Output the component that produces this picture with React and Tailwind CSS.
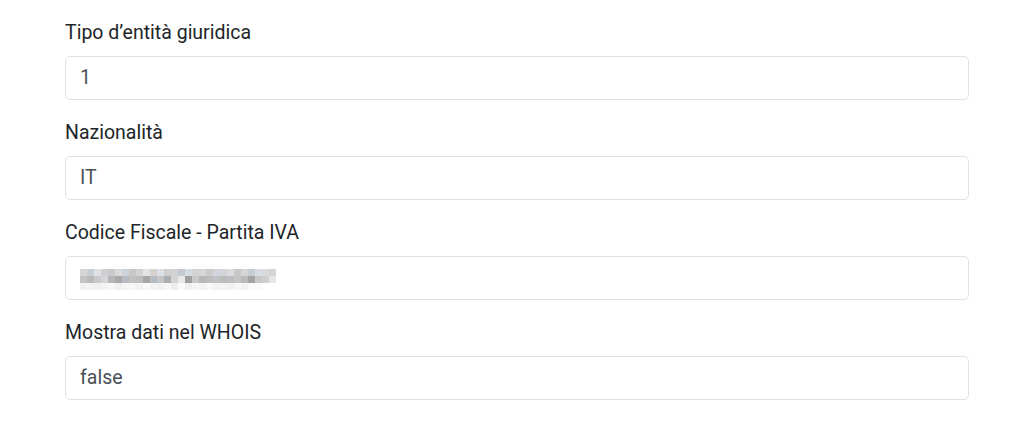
const fields = [
  { label: "Tipo d’entità giuridica", value: "1" },
  { label: "Nazionalità", value: "IT" },
  { label: "Codice Fiscale - Partita IVA", value: null },
  { label: "Mostra dati nel WHOIS", value: "false" },
];

// pixelated (blurred) value, as in the screenshot
const top = ["#d6d6d6", "#c8ced6", "#dfe3e8", "#cfcfcf", "#c9c9c9", "#d9d9d9", "#cdd3da", "#c7c7c7", "#d2d2d2", "#e3e3e3", "#d8d2cf", "#dbe0e6", "#cfcfcf", "#d1d1d1", "#c4c9cf", "#d6dbe2", "#d3d3d3", "#d7d7d7", "#cbcbcb", "#d0d6dd", "#d4d4d4", "#d9dde2", "#c9c9c9", "#d5d5d5", "#c6ccd3", "#d8dde3", "#dadada", "#d2d7dc"];
const mid = ["#c4c4c4", "#b9b9b9", "#c9c9c9", "#d5d5d5", "#b3b8bf", "#a9a9a9", "#b7bcc3", "#c1c1c1", "#bdbdbd", "#a6a6a6", "#b6bcc4", "#c6c6c6", "#a9aeb5", "#d3d3d3", "#e8e8e8", "#9f9f9f", "#c8c8c8", "#b8b8b8", "#bdbdbd", "#c2c2c2", "#bcbcbc", "#bebebe", "#c5c5c5", "#b9b9b9", "#a4a4a4", "#c9c9c9", "#cfcfcf", "#e6e6e6"];
const low = ["#f0f0f0", "#f4f4f4", "#eef1f4", "#f3f3f3", "#f6f6f6", "#efefef", "#f5f5f5", "#f7f7f7", "#f2f2f2", "#f8f8f8", "#f3f3f3", "#f1f1f1", "#f6f6f6", "#eeeeee", "#fafafa", "#f0f0f0", "#f5f5f5", "#f3f3f3", "#f8f8f8", "#f2f2f2", "#f4f4f4", "#f1f1f1", "#f7f7f7", "#f3f3f3", "#fafafa", "#fafafa", "#ffffff", "#ffffff"];

const Pixelated = () => (
  <div className="flex flex-col pt-[2px]">
    {[top, mid, low].map((row, r) => (
      <div key={r} className="flex h-[7px]">
        {row.map((c, i) => (
          <span key={i} className="block h-full w-[7px]" style={{ backgroundColor: c }} />
        ))}
      </div>
    ))}
  </div>
);

export default function App() {
  return (
    <div className="min-h-screen bg-white px-[65px] pt-[21px] font-['Roboto','Liberation_Sans',sans-serif]">
      {fields.map((f) => (
        <div key={f.label} className="mb-[21px] w-[904px]">
          <label className="mb-[11px] block text-[19.5px] leading-6 text-[#212529]">
            {f.label}
          </label>
          <div className="flex h-[44px] items-center rounded-[5px] border border-[#dee2e6] bg-white px-[14px] text-[19.5px] text-[#495057]">
            {f.value ?? <Pixelated />}
          </div>
        </div>
      ))}
    </div>
  );
}
